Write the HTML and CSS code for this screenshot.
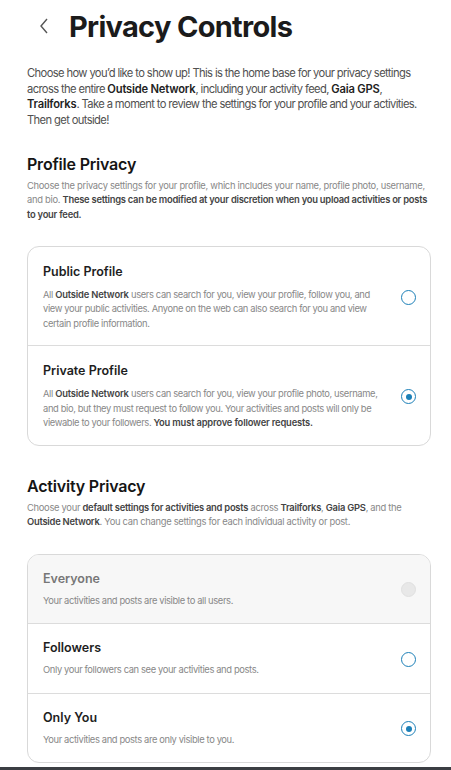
FILE: index.html
```html
<!DOCTYPE html>
<html>
<head>
<meta charset="utf-8">
<link rel="stylesheet" href="styles.css">
</head>
<body>
<div class="page">
  <header class="topbar">
    <svg class="back" width="12" height="18" viewBox="0 0 12 18"><path d="M9 2 L3 9 L9 16" fill="none" stroke="#555" stroke-width="1.4"/></svg>
    <h1 class="title">Privacy Controls</h1>
  </header>
  <p class="intro">Choose how you’d like to show up! This is the home base for your privacy settings across the entire <b>Outside Network</b>, including your activity feed, <b>Gaia GPS</b>, <b>Trailforks</b>. Take a moment to review the settings for your profile and your activities. Then get outside!</p>

  <h2 class="section-title">Profile Privacy</h2>
  <p class="section-desc">Choose the privacy settings for your profile, which includes your name, profile photo, username, and bio. <b>These settings can be modified at your discretion when you upload activities or posts to your feed.</b></p>

  <div class="card">
    <div class="option">
      <div class="opt-text">
        <div class="opt-title">Public Profile</div>
        <div class="opt-desc">All <b>Outside Network</b> users can search for you, view your profile, follow you, and view your public activities. Anyone on the web can also search for you and view certain profile information.</div>
      </div>
      <span class="radio"></span>
    </div>
    <div class="option">
      <div class="opt-text">
        <div class="opt-title">Private Profile</div>
        <div class="opt-desc">All <b>Outside Network</b> users can search for you, view your profile photo, username, and bio, but they must request to follow you. Your activities and posts will only be viewable to your followers. <b>You must approve follower requests.</b></div>
      </div>
      <span class="radio checked"></span>
    </div>
  </div>

  <h2 class="section-title second">Activity Privacy</h2>
  <p class="section-desc">Choose your <b>default settings for activities and posts</b> across <b>Trailforks</b>, <b>Gaia GPS</b>, and the <b>Outside Network</b>. You can change settings for each individual activity or post.</p>

  <div class="card card2">
    <div class="option short disabled">
      <div class="opt-text">
        <div class="opt-title">Everyone</div>
        <div class="opt-desc">Your activities and posts are visible to all users.</div>
      </div>
      <span class="radio"></span>
    </div>
    <div class="option short">
      <div class="opt-text">
        <div class="opt-title">Followers</div>
        <div class="opt-desc">Only your followers can see your activities and posts.</div>
      </div>
      <span class="radio"></span>
    </div>
    <div class="option short">
      <div class="opt-text">
        <div class="opt-title">Only You</div>
        <div class="opt-desc">Your activities and posts are only visible to you.</div>
      </div>
      <span class="radio checked"></span>
    </div>
  </div>
</div>
<div class="bottombar"></div>
</body>
</html>
```
FILE: styles.css
```css
html, body {
  margin: 0;
  padding: 0;
  background: #fff;
}
body {
  font-family: Inter, "Noto Sans", sans-serif;
  color: #222;
  height: 770px;
  overflow: hidden;
  position: relative;
}
.page {
  padding: 0 20px 0 27px;
}
.topbar {
  display: flex;
  align-items: center;
  height: 52px;
  padding-left: 11px;
}
.back {
  display: block;
  margin-right: 19px;
}
.title {
  margin: 0;
  font-size: 29px;
  font-weight: 700;
  color: #1b1b1b;
  letter-spacing: -0.7px;
}
b {
  font-weight: 600;
  color: #2a2a2a;
}
.intro {
  margin: 14px 0 0;
  font-size: 11.2px;
  line-height: 15.7px;
  letter-spacing: -0.62px;
  color: #505050;
}
.intro b {
  letter-spacing: -0.2px;
  color: #222;
}
.section-title {
  margin: 25px 0 0;
  font-size: 16px;
  font-weight: 600;
  color: #151515;
  line-height: 20px;
  letter-spacing: -0.2px;
}
.section-title.second {
  margin-top: 30px;
}
.section-desc {
  margin: 5px 0 0;
  font-size: 9.4px;
  line-height: 14.6px;
  letter-spacing: -0.3px;
  color: #888;
}
.section-desc b {
  color: #444;
  letter-spacing: -0.25px;
}
.card {
  margin-top: 23px;
  border: 1px solid #d9d9d9;
  border-radius: 12px;
  overflow: hidden;
}
.card2 {
  margin-top: 24px;
}
.option {
  display: flex;
  align-items: center;
  padding: 17px 14px 14px 15px;
  border-top: 1px solid #dcdcdc;
}
.option:first-child {
  border-top: none;
}
.opt-text {
  flex: 1;
  min-width: 0;
}
.opt-title {
  font-size: 12.5px;
  font-weight: 600;
  color: #1e1e1e;
  line-height: 16px;
}
.opt-desc {
  margin-top: 8px;
  font-size: 9.4px;
  line-height: 14.5px;
  letter-spacing: -0.38px;
  color: #888;
}
.opt-desc b {
  color: #444;
  letter-spacing: -0.18px;
}
.option.short {
  padding-top: 16px;
  padding-bottom: 15px;
}
.option.short .opt-desc {
  margin-top: 7px;
}
.disabled {
  background: #f7f7f7;
}
.disabled .opt-title {
  color: #777;
}
.radio {
  flex: none;
  width: 15px;
  height: 15px;
  box-sizing: border-box;
  border: 1.5px solid #1c80b8;
  border-radius: 50%;
  margin-left: 18px;
  display: flex;
  align-items: center;
  justify-content: center;
}
.radio.checked::after {
  content: "";
  width: 6px;
  height: 6px;
  border-radius: 50%;
  background: #1c80b8;
}
.disabled .radio {
  border: 1px solid #e0e0e0;
  background: #e8e8e8;
}
.bottombar {
  position: absolute;
  left: 0;
  right: 0;
  bottom: 0;
  height: 3px;
  background: #3b3e43;
}
```
